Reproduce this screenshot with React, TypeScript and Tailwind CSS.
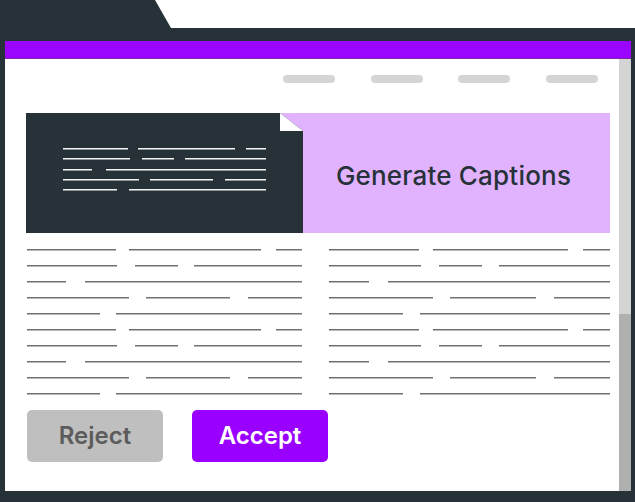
import React from "react";

type Seg = [number, number];

const leftRows: Seg[][] = [
  [[0, 89], [102, 234], [249, 275]],
  [[0, 90], [108, 151], [167, 275]],
  [[0, 39], [58, 275]],
  [[0, 102], [119, 203], [221, 275]],
  [[0, 73], [89, 275]],
];

const rightRows: Seg[][] = [
  [[0, 90], [104, 239], [254, 281]],
  [[0, 92], [110, 153], [170, 281]],
  [[0, 40], [59, 281]],
  [[0, 104], [121, 207], [225, 281]],
  [[0, 74], [91, 281]],
];

const cardRows: Seg[][] = [
  [[0, 65], [75, 172], [183, 203]],
  [[0, 67], [79, 111], [122, 203]],
  [[0, 29], [43, 203]],
  [[0, 76], [87, 150], [162, 203]],
  [[0, 54], [66, 203]],
];

function LineRow({ segs, light }: { segs: Seg[]; light?: boolean }) {
  let prev = 0;
  return (
    <div className="flex">
      {segs.map(([s, e], i) => {
        const ml = s - prev;
        prev = e;
        return (
          <div
            key={i}
            className={
              light
                ? "h-[2px] bg-[#f4f4f4] border-b border-[#8f9598]"
                : "h-[2px] bg-[#6b7175] border-b border-[#b5b9bb]"
            }
            style={{ marginLeft: ml, width: e - s }}
          />
        );
      })}
    </div>
  );
}

function TextColumn({ rows, width }: { rows: Seg[][]; width: string }) {
  const all = [...rows, ...rows];
  return (
    <div className={`flex flex-col gap-[14px] ${width}`}>
      {all.map((r, i) => (
        <LineRow key={i} segs={r} />
      ))}
    </div>
  );
}

export default function App() {
  return (
    <div
      className="w-[635px] h-[502px] bg-white flex flex-col overflow-hidden"
      style={{ fontFamily: "Inter, 'Noto Sans', sans-serif" }}
    >
      {/* top tab */}
      <div className="h-[28px] w-[171px] bg-[#263238] [clip-path:polygon(0_0,155px_0,171px_100%,0_100%)]" />

      {/* frame */}
      <div className="flex-1 bg-[#263238] pt-[13px] pl-[5px] pr-[4px] pb-[11px] flex flex-col">
        <div className="h-[18px] bg-[#9a05ff] border-b border-[#7c2aa6]" />
        <div className="flex-1 flex">
          {/* main content */}
          <div className="flex-1 bg-white flex flex-col">
            <div className="flex justify-end gap-[35.67px] pt-[16px] pr-[21px]">
              <div className="w-[52px] h-[8px] rounded-full bg-[#d5d5d5]" />
              <div className="w-[52px] h-[8px] rounded-full bg-[#d5d5d5]" />
              <div className="w-[52px] h-[8px] rounded-full bg-[#d5d5d5]" />
              <div className="w-[52px] h-[8px] rounded-full bg-[#d5d5d5]" />
            </div>

            {/* card */}
            <div className="mt-[30px] ml-[21px] w-[584px] h-[120px] flex bg-[#e1b3fe]">
              <div className="relative w-[277px] h-full bg-[#263238] pt-[35px] pl-[37px]">
                <svg
                  className="absolute top-0 right-0"
                  width="23"
                  height="18"
                  viewBox="0 0 23 18"
                >
                  <polygon points="0,0 23,0 23,18" fill="#e1b3fe" />
                  <polygon points="0,0 0,18 23,18" fill="#ffffff" />
                </svg>
                <div className="flex flex-col gap-[8.25px] w-[203px]">
                  {cardRows.map((r, i) => (
                    <LineRow key={i} segs={r} light />
                  ))}
                </div>
              </div>
              <div className="flex-1 flex items-center justify-center pt-[5px] pr-[6px]">
                <span className="text-[26px] font-medium tracking-[0.2px] text-[#263238] leading-none">
                  Generate Captions
                </span>
              </div>
            </div>

            {/* text columns */}
            <div className="mt-[16px] ml-[22px] flex gap-[27px]">
              <TextColumn rows={leftRows} width="w-[275px]" />
              <TextColumn rows={rightRows} width="w-[281px]" />
            </div>

            {/* buttons */}
            <div className="mt-[15px] ml-[22px] flex gap-[29px]">
              <button className="w-[136px] h-[52px] rounded-[5px] bg-[#bfbfbf] text-[#5c5c5c] text-[24px] font-semibold">
                Reject
              </button>
              <button className="w-[136px] h-[52px] rounded-[5px] bg-[#9a00ff] text-white text-[24px] font-semibold">
                Accept
              </button>
            </div>
          </div>

          {/* scrollbar */}
          <div className="w-[12px] flex flex-col">
            <div className="h-[255px] bg-[#d4d4d4]" />
            <div className="flex-1 bg-[#b0b0b0]" />
          </div>
        </div>
      </div>
    </div>
  );
}
